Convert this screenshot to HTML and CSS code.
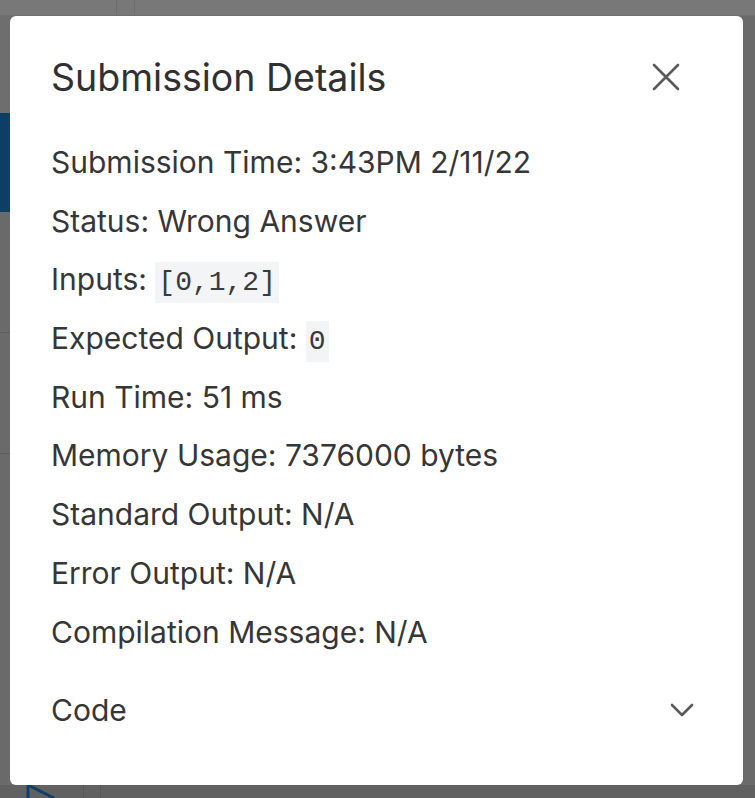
FILE: index.html
```html
<!DOCTYPE html>
<html>
<head>
<meta charset="utf-8">
<link rel="stylesheet" href="styles.css">
</head>
<body>
<div class="page">
  <div class="topbar">
    <span class="tb-sep tb-a"></span><span class="tb-sep tb-b"></span>
  </div>
  <div class="main">
    <div class="side">
      <div class="side-gap"></div>
      <div class="side-blue"></div>
      <div class="side-row"></div>
      <div class="side-row"></div>
    </div>
  </div>
  <div class="bottom">
    <svg class="tri" width="30" height="14" viewBox="0 0 30 14"><path d="M2 1 L2 14 M2 1 L28 14" stroke="#0c3f69" stroke-width="3" fill="none"/></svg>
    <span class="b-sep b-a"></span><span class="b-sep b-b"></span>
  </div>
</div>
<div class="overlay">
  <div class="modal">
    <header class="modal-header">
      <h2 class="title">Submission Details</h2>
      <button class="close" aria-label="Close">
        <svg width="28" height="28" viewBox="0 0 28 28"><path d="M2 2 L26 26 M26 2 L2 26" stroke="#5a5a5a" stroke-width="2.6" stroke-linecap="round"/></svg>
      </button>
    </header>
    <div class="modal-body">
      <p class="row">Submission Time: 3:43PM 2/11/22</p>
      <p class="row">Status: Wrong Answer</p>
      <p class="row">Inputs: <code class="code">[0,1,2]</code></p>
      <p class="row">Expected Output: <code class="code">0</code></p>
      <p class="row">Run Time: 51 ms</p>
      <p class="row">Memory Usage: 7376000 bytes</p>
      <p class="row">Standard Output: N/A</p>
      <p class="row">Error Output: N/A</p>
      <p class="row">Compilation Message: N/A</p>
      <div class="accordion">
        <span>Code</span>
        <svg width="24" height="14" viewBox="0 0 24 14"><path d="M2 2 L12 12 L22 2" stroke="#5a5a5a" stroke-width="2.6" fill="none" stroke-linecap="round" stroke-linejoin="round"/></svg>
      </div>
    </div>
  </div>
</div>
</body>
</html>
```
FILE: styles.css
```css
html, body { margin: 0; padding: 0; }
body {
  width: 755px;
  height: 798px;
  overflow: hidden;
  position: relative;
  background: #6a6a6a;
  font-family: Inter, "Noto Sans", sans-serif;
}
.page { display: flex; flex-direction: column; height: 798px; }
.topbar {
  height: 15px;
  background: #787878;
  border-bottom: 1px solid #6e6e6e;
  position: relative;
  display: flex;
}
.tb-sep { width: 1px; background: #6c6c6c; height: 15px; }
.tb-a { margin-left: 116px; }
.tb-b { margin-left: 17px; }
.main { flex: 1; display: flex; }
.side { width: 10px; display: flex; flex-direction: column; }
.side-gap { height: 97px; background: #6e6e6e; }
.side-blue { height: 99px; background: #0d3e66; }
.side-row { height: 120px; border-bottom: 1px solid #5e5e5e; background: #6a6a6a; }
.bottom { height: 13px; display: flex; align-items: flex-end; background: #616161; }
.tri { margin-left: 26px; }
.b-sep { width: 1px; height: 13px; background: #575757; }
.b-a { margin-left: 27px; }
.b-b { margin-left: 16px; }

.overlay { position: absolute; inset: 0; }
.modal {
  position: absolute;
  left: 10px;
  top: 16px;
  width: 733px;
  height: 769px;
  background: #fff;
  border-radius: 6px;
  box-sizing: border-box;
  padding: 0 41px;
  color: #363636;
}
.modal-header {
  display: flex;
  align-items: center;
  justify-content: space-between;
  height: 122px;
}
.title {
  margin: 0;
  font-weight: 400;
  font-size: 37.5px;
  color: #303030;
}
.close {
  background: none;
  border: 0;
  padding: 0;
  margin-right: 22px;
  width: 28px;
  height: 28px;
  display: flex;
}
.modal-body { display: flex; flex-direction: column; margin-top: -5px; }
.row {
  margin: 0;
  font-size: 30px;
  line-height: 58.7px;
  height: 58.7px;
  color: #363636;
}
.code {
  font-family: "Liberation Mono", "DejaVu Sans Mono", monospace;
  font-size: 28px;
  background: #f3f4f6;
  padding: 5px 3px;
  color: #3a3a3a;
}
.accordion {
  display: flex;
  align-items: center;
  justify-content: space-between;
  height: 78px;
  font-size: 30px;
  margin-top: 10px;
  color: #363636;
}
.accordion svg { margin-right: 8px; }
```
